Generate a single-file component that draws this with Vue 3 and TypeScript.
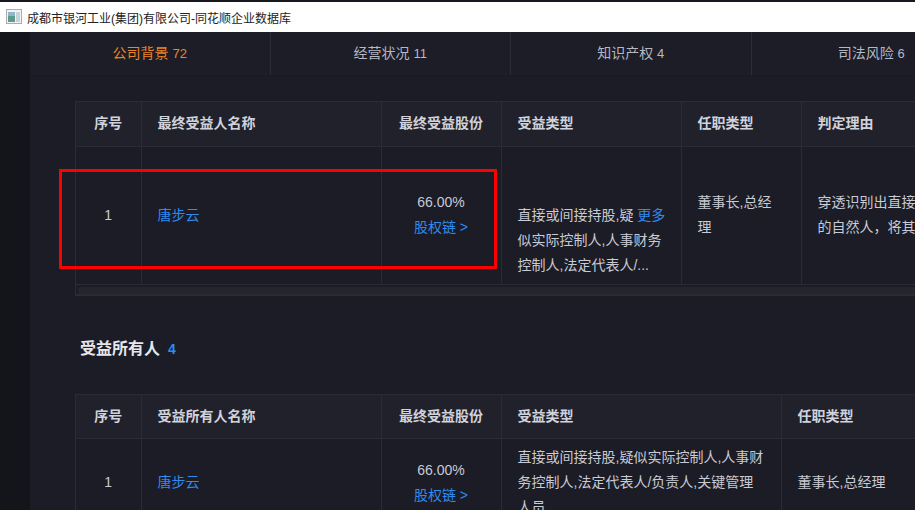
<script setup lang="ts">
interface Tab {
  name: string
  count: number
}

const tabs: Tab[] = [
  { name: '公司背景', count: 72 },
  { name: '经营状况', count: 11 },
  { name: '知识产权', count: 4 },
  { name: '司法风险', count: 6 },
]
</script>

<template>
  <div class="window">
    <div class="titlebar">
      <svg class="app-icon" width="16" height="16" viewBox="0 0 16 16">
        <rect x="0.5" y="0.5" width="15" height="14" fill="#f2f4f4" stroke="#a9adb0" />
        <rect x="2" y="3" width="7" height="10" fill="#5f9a92" />
        <rect x="2" y="3" width="7" height="4" fill="#8fb5cf" />
        <rect x="10" y="3" width="4" height="10" fill="#c9d2d6" />
      </svg>
      <span class="title">成都市银河工业(集团)有限公司-同花顺企业数据库</span>
    </div>

    <div class="body">
      <div class="sidebar"></div>
      <div class="main">
        <div class="tabs">
          <div v-for="(tab, i) in tabs" :key="tab.name" class="tab" :class="{ active: i === 0 }">
            {{ tab.name }} <span class="tab-count">{{ tab.count }}</span>
          </div>
        </div>

        <div class="content">
          <div class="table-wrap first">
            <table class="table">
              <colgroup>
                <col class="col-no" />
                <col class="col-name" />
                <col class="col-share" />
                <col class="col-type" />
                <col class="col-job" />
                <col class="col-reason" />
              </colgroup>
              <thead>
                <tr>
                  <th class="center">序号</th>
                  <th>最终受益人名称</th>
                  <th class="center">最终受益股份</th>
                  <th>受益类型</th>
                  <th>任职类型</th>
                  <th>判定理由</th>
                </tr>
              </thead>
              <tbody>
                <tr class="tall">
                  <td class="center">1</td>
                  <td><a class="link">唐步云</a></td>
                  <td class="center">66.00%<br /><a class="link">股权链 &gt;</a></td>
                  <td class="types">
                    直接或间接持股,疑 <a class="link">更多</a><br />
                    似实际控制人,人事财务<br />
                    控制人,法定代表人/...
                  </td>
                  <td class="job">董事长,总经理</td>
                  <td class="nowrap">穿透识别出直接或间接持股比例最高<br />的自然人，将其判定为最终受益人</td>
                </tr>
              </tbody>
            </table>
            <div class="scrollbar"><div class="thumb"></div></div>
          </div>

          <h3 class="section-title">受益所有人<span class="section-count">4</span></h3>

          <div class="table-wrap">
            <table class="table">
              <colgroup>
                <col class="col-no" />
                <col class="col-name" />
                <col class="col-share" />
                <col class="col-type-wide" />
                <col class="col-job-wide" />
              </colgroup>
              <thead>
                <tr>
                  <th class="center">序号</th>
                  <th>受益所有人名称</th>
                  <th class="center">最终受益股份</th>
                  <th>受益类型</th>
                  <th>任职类型</th>
                </tr>
              </thead>
              <tbody>
                <tr>
                  <td class="center">1</td>
                  <td><a class="link">唐步云</a></td>
                  <td class="center">66.00%<br /><a class="link">股权链 &gt;</a></td>
                  <td>直接或间接持股,疑似实际控制人,人事财务控制人,法定代表人/负责人,关键管理人员</td>
                  <td>董事长,总经理</td>
                </tr>
              </tbody>
            </table>
          </div>
        </div>
      </div>
    </div>

    <div class="highlight"></div>
  </div>
</template>

<style>
html,
body {
  margin: 0;
  overflow: hidden;
  background: #1b1c25;
}
</style>

<style scoped>
.window {
  position: relative;
  width: 915px;
  height: 510px;
  overflow: hidden;
  display: flex;
  flex-direction: column;
  border-top: 2px solid #17181f;
  box-sizing: border-box;
  font-family: 'Liberation Sans', 'Noto Sans CJK SC', sans-serif;
  font-size: 14px;
  color: #c8cad6;
  background: #1b1c25;
}

.titlebar {
  flex: none;
  height: 30px;
  background: #fff;
  display: flex;
  align-items: center;
  padding-left: 6px;
  gap: 5px;
}

.title {
  font-size: 12px;
  color: #222;
  white-space: nowrap;
}

.body {
  flex: 1;
  display: flex;
  min-height: 0;
}

.sidebar {
  flex: none;
  width: 30px;
  background: #14151a;
}

.main {
  flex: 1;
  min-width: 0;
}

.tabs {
  display: flex;
  height: 44px;
  background: #1c1d26;
  border-bottom: 1px solid #191a21;
  box-sizing: border-box;
}

.tab {
  flex: none;
  width: 240.5px;
  box-sizing: border-box;
  border-right: 1px solid #2b2c36;
  line-height: 43px;
  text-align: center;
  white-space: nowrap;
  color: #b6b8c4;
}

.tab.active {
  color: #e8862a;
}

.tab-count {
  font-size: 13px;
}

.content {
  padding: 25px 0 0 45px;
  width: 870px;
  box-sizing: border-box;
}

.table-wrap {
  width: 1127px;
  border: 1px solid #2a2b35;
  border-bottom: 0;
  box-sizing: border-box;
}

.table-wrap.first {
  border-bottom: 2px solid #2a2b35;
}

.table {
  table-layout: fixed;
  width: 1125px;
  border-collapse: collapse;
}

.col-no {
  width: 65px;
}

.col-name {
  width: 240px;
}

.col-share {
  width: 120px;
}

.col-type {
  width: 180px;
}

.col-job {
  width: 120px;
}

.col-reason {
  width: 400px;
}

.col-type-wide {
  width: 280px;
}

.col-job-wide {
  width: 420px;
}

.table th,
.table td {
  border-right: 1px solid #2a2b35;
  border-bottom: 1px solid #2a2b35;
  padding: 0 16px;
  text-align: left;
  font-size: 14px;
  line-height: 25px;
  box-sizing: border-box;
}

.table th {
  height: 44px;
  background: #20212b;
  font-weight: 700;
  color: #d0d2dc;
}

.table td {
  height: 88px;
  color: #c8cad6;
}

.table tr.tall td {
  height: 138px;
}

.table .center {
  text-align: center;
  padding: 0 4px;
}

.table td.types {
  padding-top: 50px;
  padding-right: 8px;
  padding-bottom: 0;
  white-space: nowrap;
}

.table td.job {
  padding-right: 20px;
}

.table td.nowrap {
  white-space: nowrap;
}

.link {
  color: #2f8bf0;
}

.scrollbar {
  height: 9px;
  padding: 2px 0 0 2px;
  box-sizing: border-box;
}

.thumb {
  height: 7px;
  border-radius: 3px;
  background: #24252d;
}

.section-title {
  margin: 42px 0 34px 5px;
  font-size: 16px;
  line-height: 22px;
  font-weight: 700;
  color: #e6e7ee;
}

.section-count {
  margin-left: 8px;
  font-size: 14px;
  color: #2f8bf0;
}

.app-icon {
  flex: none;
}

.highlight {
  position: absolute;
  left: 59px;
  top: 167px;
  width: 438px;
  height: 100px;
  border: 3px solid #f00;
  box-sizing: border-box;
}
</style>
